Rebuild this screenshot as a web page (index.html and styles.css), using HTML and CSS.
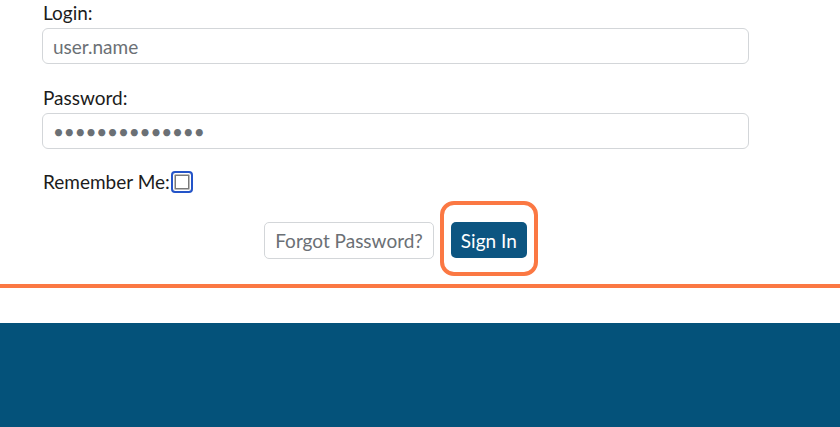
FILE: index.html
```html
<!DOCTYPE html>
<html lang="en">
<head>
  <meta charset="UTF-8" />
  <meta name="viewport" content="width=device-width, initial-scale=1.0" />
  <title>Sign In</title>
  <link rel="stylesheet" href="styles.css">
</head>
<body>
  <form class="login-form">
    <div class="field">
      <label for="login">Login:</label>
      <input type="text" id="login" placeholder="user.name" />
    </div>

    <div class="field">
      <label for="password">Password:</label>
      <input type="password" id="password" value="12345678901234" />
    </div>

    <div class="remember">
      <label for="remember">Remember Me:</label>
      <input type="checkbox" id="remember" />
    </div>

    <div class="actions">
      <button type="button" class="btn-link">Forgot Password?</button>
      <div class="highlight">
        <button type="submit" class="btn-primary">Sign In</button>
      </div>
    </div>
  </form>

  <div class="divider"></div>
  <footer class="footer"></footer>
</body>
</html>
```

FILE: styles.css
```css
body {
  margin: 0;
  font-family: Lato, "Open Sans", sans-serif;
  font-size: 19px;
  color: #1c1c1c;
  background: white;
}
.login-form {
  width: 707px;
  margin-left: 42px;
  padding-top: 1px;
}
.field {
  margin-bottom: 22px;
}
.field label {
  display: block;
  line-height: 24px;
  margin-bottom: 3px;
  padding-left: 1px;
}
.field input {
  box-sizing: border-box;
  width: 100%;
  height: 36px;
  padding: 0 10px;
  font-family: inherit;
  font-size: 19px;
  color: #6b7075;
  border: 1.5px solid #d3d6d9;
  border-radius: 6px;
  outline: none;
}
.field input::placeholder {
  color: #6b7075;
}
.field input[type="password"] {
  letter-spacing: -0.2px;
}
.remember {
  display: flex;
  align-items: center;
  height: 22px;
  padding-left: 1px;
}
.remember label {
  line-height: 24px;
}
.remember input {
  appearance: none;
  flex-shrink: 0;
  box-sizing: border-box;
  width: 22px;
  height: 22px;
  margin: 0 0 0 1px;
  border: 2px solid #2454c8;
  border-radius: 4px;
  background: white;
  box-shadow: inset 0 0 0 1.5px #fff, inset 0 0 0 3px #7a7a7a;
}
.actions {
  display: flex;
  justify-content: center;
  gap: 17px;
  margin-top: 29px;
}
.actions button {
  height: 37px;
  font-family: inherit;
  font-size: 19px;
  border-radius: 5px;
  cursor: pointer;
}
.btn-link {
  padding: 0 10px;
  background: white;
  color: #6b7075;
  border: 1.5px solid #d3d6d9;
}
.highlight {
  position: relative;
}
.highlight::after {
  content: "";
  position: absolute;
  left: -11px;
  right: -11px;
  top: -21px;
  bottom: -17px;
  border: 4px solid #fb7843;
  border-radius: 14px;
  pointer-events: none;
}
.btn-primary {
  height: 36px !important;
  padding: 0 10px;
  background: #0c5581;
  color: white;
  border: none;
}
.divider {
  height: 4px;
  margin-top: 25px;
  background: #fb7843;
}
.footer {
  height: 104px;
  margin-top: 35px;
  background: #04527a;
}
```
